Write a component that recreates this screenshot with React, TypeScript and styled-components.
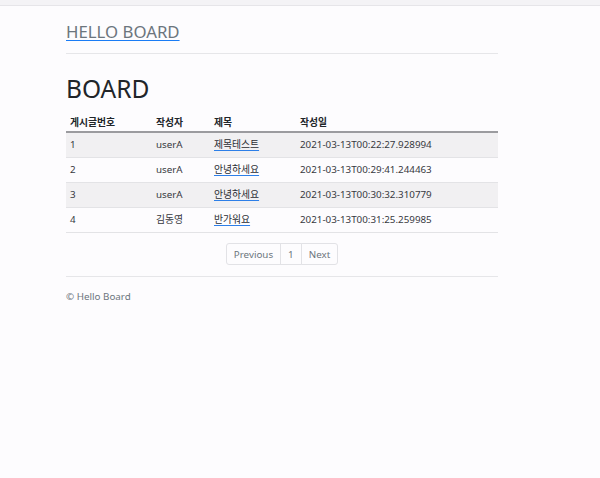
import React from "react";
import styled, { createGlobalStyle } from "styled-components";

const Global = createGlobalStyle`
  html, body { margin: 0; padding: 0; background: #fdfcfe; }
  body { font-family: "Noto Sans", "Noto Sans CJK KR", sans-serif; color: #212529; }
`;

const TopStrip = styled.div`
  height: 5px;
  background: #f4f3f6;
  border-bottom: 1px solid #e6e5e9;
`;

const Container = styled.div`
  width: 432px;
  margin-left: 66px;
`;

const Header = styled.header`
  padding-top: 14px;
  padding-bottom: 9px;
  border-bottom: 1px solid #e6e6e9;
`;

const Brand = styled.a`
  font-size: 16.8px;
  line-height: 24px;
  color: #6c757d;
  text-decoration: underline;
  text-decoration-color: #1a7cf5;
  text-underline-offset: 2px;
`;

const Title = styled.h1`
  margin: 19px 0 0;
  font-size: 24.5px;
  font-weight: 400;
  line-height: 32px;
  color: #212529;
`;

const Table = styled.table`
  width: 100%;
  table-layout: fixed;
  border-collapse: collapse;
  font-size: 9.8px;
  line-height: 14px;
  margin-top: 3px;
`;

const Th = styled.th<{ $w: number }>`
  box-sizing: border-box;
  text-align: left;
  font-weight: 600;
  padding: 0 4px 1px;
  height: 24px;
  vertical-align: bottom;
  border-bottom: 2px solid #9b9b9f;
  color: #212529;
  width: ${(p) => p.$w}px;
`;

const Tr = styled.tr<{ $striped?: boolean }>`
  background: ${(p) => (p.$striped ? "#f1f0f2" : "transparent")};
`;

const Td = styled.td`
  padding: 0 4px;
  height: 24px;
  vertical-align: middle;
  border-bottom: 1px solid #e3e3e6;
  color: #37393e;
`;

const TitleLink = styled.a`
  color: #2a2d33;
  text-decoration: underline;
  text-decoration-color: #2d7fe8;
  text-underline-offset: 2px;
`;

const PagerRow = styled.nav`
  display: flex;
  justify-content: center;
  padding: 10px 0 11px;
  border-bottom: 1px solid #e6e6e9;
`;

const Pager = styled.ul`
  display: flex;
  list-style: none;
  margin: 0;
  padding: 0;
`;

const PageItem = styled.li<{ $first?: boolean; $last?: boolean }>`
  height: 22px;
  box-sizing: border-box;
  padding: 0 7px;
  display: flex;
  align-items: center;
  font-size: 9.8px;
  color: #6c757d;
  border: 1px solid #e2e2e6;
  margin-left: ${(p) => (p.$first ? "0" : "-1px")};
  border-radius: ${(p) =>
    p.$first ? "3px 0 0 3px" : p.$last ? "0 3px 3px 0" : "0"};
  background: #fdfcfe;
`;

const Footer = styled.footer`
  padding-top: 13px;
  font-size: 9.8px;
  line-height: 14px;
  color: #6c757d;
`;

const rows = [
  { id: 1, writer: "userA", title: "제목테스트", date: "2021-03-13T00:22:27.928994" },
  { id: 2, writer: "userA", title: "안녕하세요", date: "2021-03-13T00:29:41.244463" },
  { id: 3, writer: "userA", title: "안녕하세요", date: "2021-03-13T00:30:32.310779" },
  { id: 4, writer: "김동영", title: "반가워요", date: "2021-03-13T00:31:25.259985" },
];

export default function App() {
  return (
    <>
      <Global />
      <TopStrip />
      <Container>
        <Header>
          <Brand href="#">HELLO BOARD</Brand>
        </Header>
        <Title>BOARD</Title>
        <Table>
          <thead>
            <tr>
              <Th $w={86}>게시글번호</Th>
              <Th $w={58}>작성자</Th>
              <Th $w={86}>제목</Th>
              <Th $w={202}>작성일</Th>
            </tr>
          </thead>
          <tbody>
            {rows.map((r, i) => (
              <Tr key={r.id} $striped={i % 2 === 0}>
                <Td>{r.id}</Td>
                <Td>{r.writer}</Td>
                <Td>
                  <TitleLink href="#">{r.title}</TitleLink>
                </Td>
                <Td>{r.date}</Td>
              </Tr>
            ))}
          </tbody>
        </Table>
        <PagerRow>
          <Pager>
            <PageItem $first>Previous</PageItem>
            <PageItem>1</PageItem>
            <PageItem $last>Next</PageItem>
          </Pager>
        </PagerRow>
        <Footer>© Hello Board</Footer>
      </Container>
    </>
  );
}
